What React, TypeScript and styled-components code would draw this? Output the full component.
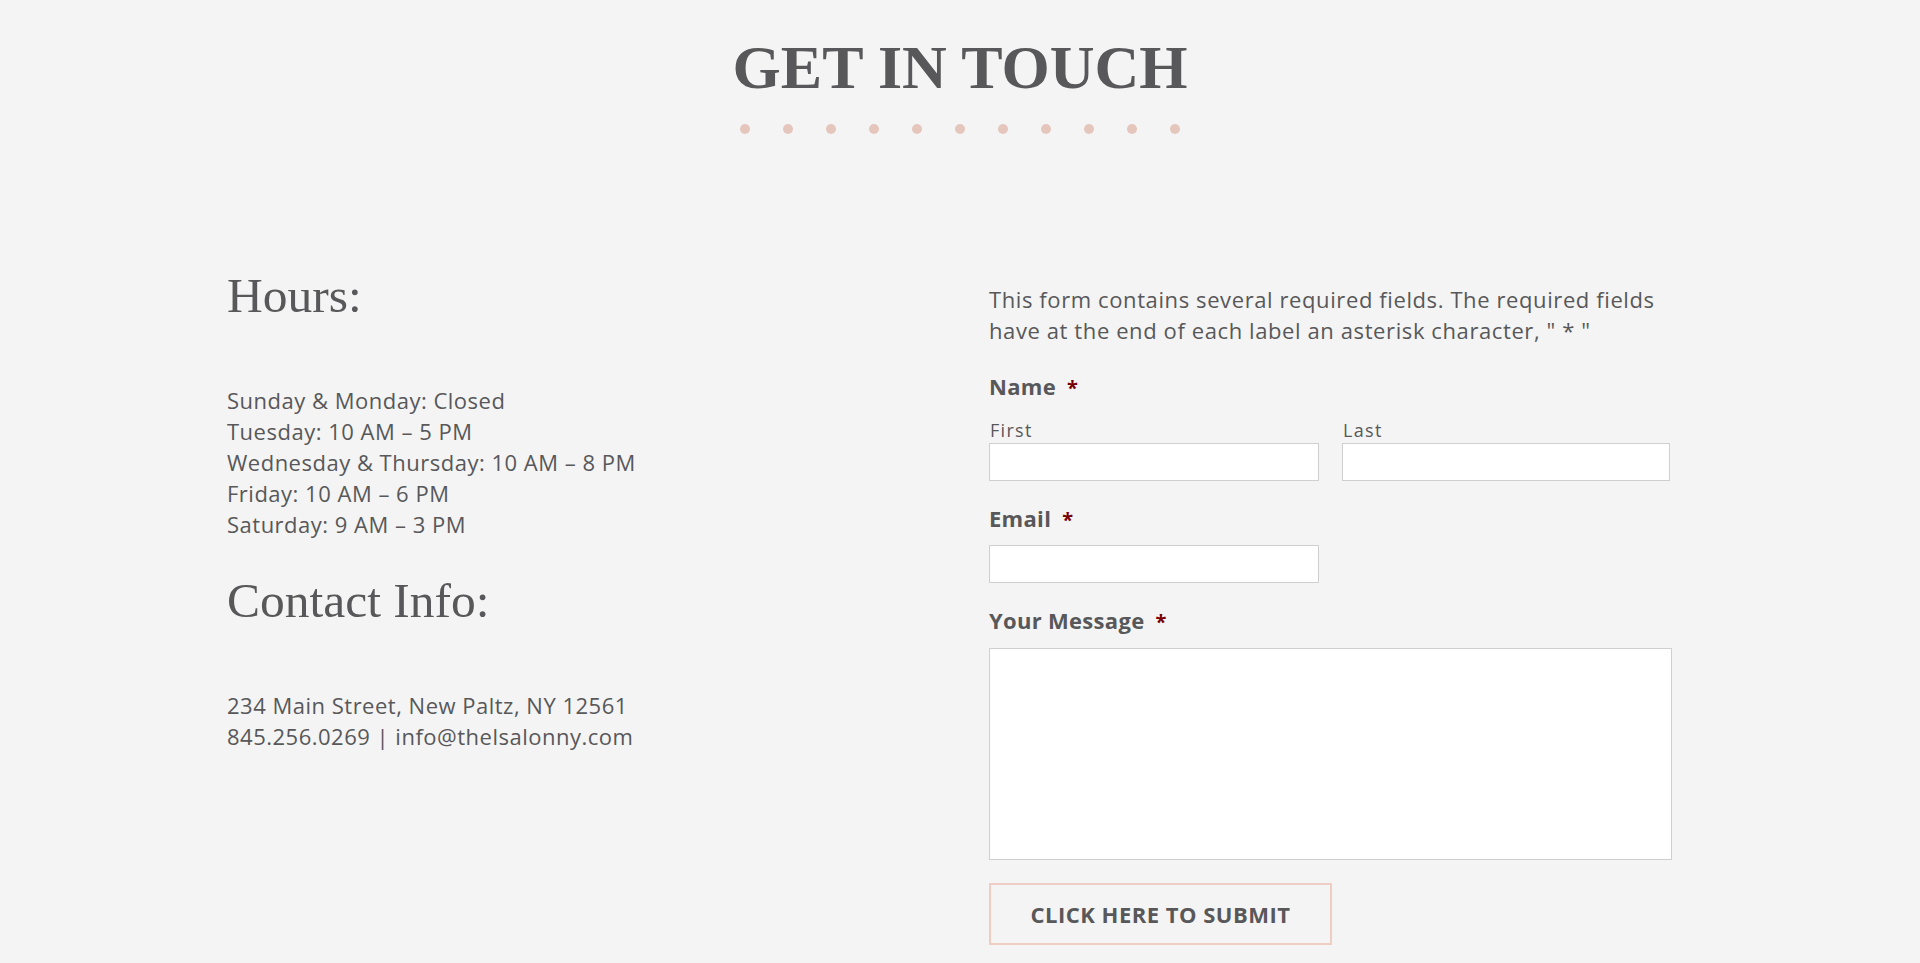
import { createGlobalStyle, styled } from "styled-components";

const GlobalStyle = createGlobalStyle`
  body {
    margin: 0;
    background: #f4f4f4;
    color: #58585a;
  }
`;

const hours = [
  "Sunday & Monday: Closed",
  "Tuesday: 10 AM – 5 PM",
  "Wednesday & Thursday: 10 AM – 8 PM",
  "Friday: 10 AM – 6 PM",
  "Saturday: 9 AM – 3 PM",
];

const contact = ["234 Main Street, New Paltz, NY 12561", "845.256.0269 | info@thelsalonny.com"];

const App = () => {
  return (
    <Page>
      <GlobalStyle />
      <Header>
        <Title>GET IN TOUCH</Title>
        <Dots>
          {Array.from({ length: 11 }).map((_, i) => (
            <Dot key={i} />
          ))}
        </Dots>
      </Header>
      <Columns>
        <InfoColumn>
          <Heading>Hours:</Heading>
          <InfoText>
            {hours.map((line) => (
              <div key={line}>{line}</div>
            ))}
          </InfoText>
          <Heading $spaced>Contact Info:</Heading>
          <InfoText>
            {contact.map((line) => (
              <div key={line}>{line}</div>
            ))}
          </InfoText>
        </InfoColumn>
        <Form onSubmit={(e) => e.preventDefault()}>
          <Intro>
            This form contains several required fields. The required fields have at the end of each label an asterisk
            character, " * "
          </Intro>
          <Field $first>
            <FieldLabel>
              Name<Required>*</Required>
            </FieldLabel>
            <NameRow>
              <SubField>
                <SubLabel>First</SubLabel>
                <TextInput type="text" />
              </SubField>
              <SubField>
                <SubLabel>Last</SubLabel>
                <TextInput type="text" />
              </SubField>
            </NameRow>
          </Field>
          <Field>
            <FieldLabel>
              Email<Required>*</Required>
            </FieldLabel>
            <TextInput type="email" $width={330} />
          </Field>
          <Field>
            <FieldLabel>
              Your Message<Required>*</Required>
            </FieldLabel>
            <MessageBox />
          </Field>
          <SubmitButton type="submit">Click here to submit</SubmitButton>
        </Form>
      </Columns>
    </Page>
  );
};

export default App;

const Page = styled.div`
  min-height: 963px;
  overflow: hidden;
`;

const Header = styled.header`
  display: flex;
  flex-direction: column;
  align-items: center;
  padding-top: 36px;
`;

const Title = styled.h1`
  margin: 0;
  font-family: "Liberation Serif", serif;
  font-weight: bold;
  font-size: 62px;
  line-height: 1;
  color: #58585a;
`;

const Dots = styled.div`
  display: flex;
  gap: 33px;
  margin-top: 26px;
`;

const Dot = styled.span`
  width: 10px;
  height: 10px;
  border-radius: 50%;
  background: #e5c6bc;
`;

const Columns = styled.main`
  display: grid;
  grid-template-columns: minmax(0, 1fr) minmax(0, 1fr);
  column-gap: 58px;
  max-width: 1466px;
  margin: 132px auto 0;
  align-items: start;
`;

const InfoColumn = styled.section`
  display: flex;
  flex-direction: column;
`;

const Heading = styled.h2<{ $spaced?: boolean }>`
  margin: ${(props) => (props.$spaced ? "31.5px" : "0")} 0 59.5px;
  font-family: "Liberation Serif", serif;
  font-weight: normal;
  font-size: 49.5px;
  line-height: 59px;
  color: #58585a;
`;

const InfoText = styled.div`
  font-family: "Open Sans", sans-serif;
  font-size: 22px;
  line-height: 31px;
  letter-spacing: 0.5px;
  color: #58585a;
`;

const Form = styled.form`
  display: flex;
  flex-direction: column;
  align-items: flex-start;
  padding-top: 18px;
  font-family: "Open Sans", sans-serif;
`;

const Intro = styled.p`
  margin: 0;
  width: 700px;
  font-size: 22px;
  line-height: 31px;
  letter-spacing: 0.6px;
  color: #58585a;
`;

const Field = styled.div<{ $first?: boolean }>`
  display: flex;
  flex-direction: column;
  margin-top: ${(props) => (props.$first ? "25px" : "22px")};
`;

const FieldLabel = styled.label`
  font-size: 22px;
  font-weight: bold;
  line-height: 30px;
  letter-spacing: 0.3px;
  color: #58585a;
  margin-bottom: 10.5px;
`;

const Required = styled.span`
  color: #790000;
  margin-left: 11px;
  font-size: 20px;
`;

const NameRow = styled.div`
  display: grid;
  grid-template-columns: 330px 328px;
  column-gap: 23px;
  margin-top: 4px;
`;

const SubField = styled.div`
  display: flex;
  flex-direction: column;
`;

const SubLabel = styled.label`
  font-size: 18px;
  line-height: 24px;
  letter-spacing: 1.3px;
  color: #58585a;
  padding-left: 1px;
  margin-bottom: 1px;
`;

const TextInput = styled.input<{ $width?: number }>`
  box-sizing: border-box;
  width: ${(props) => (props.$width ? `${props.$width}px` : "100%")};
  height: 38px;
  margin: 0;
  background: #fff;
  border: 1px solid #cfcfcf;
  border-radius: 0;
  outline: none;
`;

const MessageBox = styled.textarea`
  box-sizing: border-box;
  width: 683px;
  height: 212px;
  margin: 0;
  background: #fff;
  border: 1px solid #cfcfcf;
  border-radius: 0;
  resize: none;
  outline: none;
`;

const SubmitButton = styled.button`
  box-sizing: border-box;
  width: 343px;
  height: 62px;
  margin-top: 23px;
  background: transparent;
  border: 2px solid #efcdc2;
  font-family: "Open Sans", sans-serif;
  font-weight: bold;
  font-size: 22px;
  text-transform: uppercase;
  letter-spacing: 0.5px;
  color: #58585a;
  cursor: pointer;
`;
